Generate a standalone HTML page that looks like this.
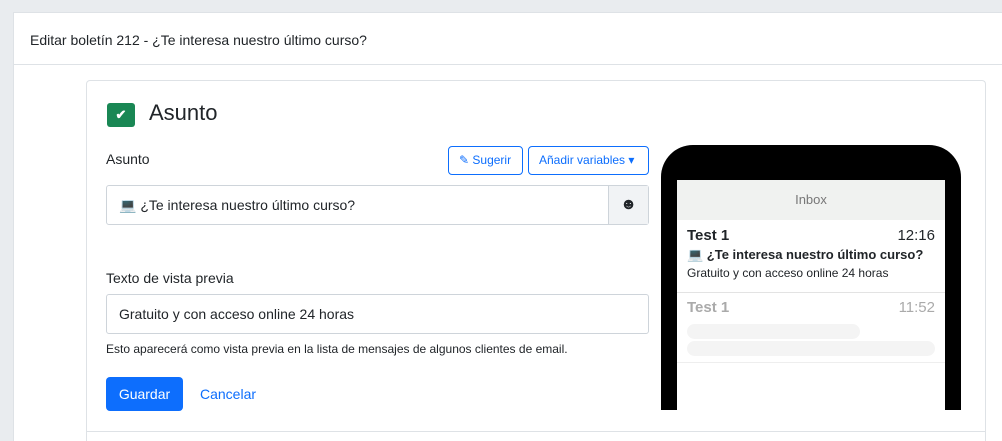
<!DOCTYPE html>
<html><head><meta charset="utf-8"><style>
*{box-sizing:border-box;margin:0;padding:0}
html,body{width:1002px;height:441px;overflow:hidden}
body{background:#e9ecef;font-family:"Liberation Sans",sans-serif;color:#212529;position:relative}
.card{position:absolute;left:13px;top:12px;width:989px;height:429px;background:#fff;border:1px solid #dee2e6;border-right:none;border-bottom:none;overflow:hidden}
.hdr{position:absolute;left:0;top:0;width:100%;height:52px;border-bottom:1px solid #dee2e6;font-size:14px;padding:19px 0 0 16px}
.inner{position:absolute;left:72px;top:67px;width:900px;height:362px;border:1px solid #dee2e6;border-bottom:none;border-radius:4px 4px 0 0}
.abs{position:absolute}
.chk{left:20px;top:22px;width:28px;height:24px;background:#198754;border-radius:3px;color:#fff;font-size:13px;text-align:center;line-height:24px;font-weight:bold}
.btn{position:absolute;border:1px solid #0d6efd;color:#0d6efd;border-radius:4px;font-size:12px;height:29px;line-height:27px;padding:0 10px;background:#fff}
.inp{position:absolute;border:1px solid #ced4da;border-radius:3px;font-size:14px;padding-left:12px;background:#fff}
</style></head><body>
<div class="card">
<div class="hdr">Editar boletín 212 - ¿Te interesa nuestro último curso?</div>
<div class="inner">
<div class="abs chk">✔</div>
<div class="abs" style="left:62px;top:19px;font-size:22px">Asunto</div>
<div class="abs" style="left:19px;top:70px;font-size:14px">Asunto</div>
<div class="btn" style="left:361px;top:65px;width:75px">✎ Sugerir</div>
<div class="btn" style="left:441px;top:65px;width:121px">Añadir variables ▾</div>
<div class="inp" style="left:19px;top:104px;width:543px;height:40px;line-height:38px">💻 ¿Te interesa nuestro último curso?
<div class="abs" style="right:0;top:0;width:40px;height:38px;background:#f1f3f5;border-left:1px solid #ced4da;text-align:center;font-size:16px">☻</div></div>
<div class="abs" style="left:19px;top:189px;font-size:14px">Texto de vista previa</div>
<div class="inp" style="left:19px;top:213px;width:543px;height:40px;line-height:38px">Gratuito y con acceso online 24 horas</div>
<div class="abs" style="left:19px;top:261px;font-size:12px">Esto aparecerá como vista previa en la lista de mensajes de algunos clientes de email.</div>
<div class="abs" style="left:19px;top:296px;width:77px;height:34px;background:#0d6efd;color:#fff;border-radius:4px;font-size:14px;text-align:center;line-height:34px">Guardar</div>
<div class="abs" style="left:113px;top:305px;font-size:14px;color:#0d6efd">Cancelar</div>
<div class="abs" style="left:574px;top:64px;width:300px;height:265px;background:#000;border-radius:32px 32px 0 0"></div>
<div class="abs" style="left:590px;top:99px;width:268px;height:230px;background:#fff">
<div style="height:40px;background:#f0f2f0;text-align:center;line-height:40px;font-size:13px;color:#777">Inbox</div>
<div style="height:73px;border-bottom:1px solid #e3e3e3;padding:7px 10px 0 10px;font-size:12px">
<div style="font-size:15px;font-weight:bold;display:flex;justify-content:space-between"><span>Test 1</span><span style="font-weight:normal">12:16</span></div>
<div style="font-weight:bold;font-size:13px;margin-top:3px">💻 ¿Te interesa nuestro último curso?</div>
<div style="margin-top:3px">Gratuito y con acceso online 24 horas</div></div>
<div style="height:70px;border-bottom:1px solid #eee;padding:6px 10px 0 10px;color:#aaa">
<div style="font-size:15px;font-weight:bold;display:flex;justify-content:space-between"><span>Test 1</span><span style="font-weight:normal">11:52</span></div>
<div style="margin-top:8px;width:173px;height:15px;border-radius:8px;background:#f4f4f4"></div>
<div style="margin-top:2px;width:248px;height:15px;border-radius:8px;background:#f4f4f4"></div></div>
</div>
<div class="abs" style="left:0;top:350px;width:898px;height:1px;background:#dee2e6"></div>
</div>
</div>
</body></html>
